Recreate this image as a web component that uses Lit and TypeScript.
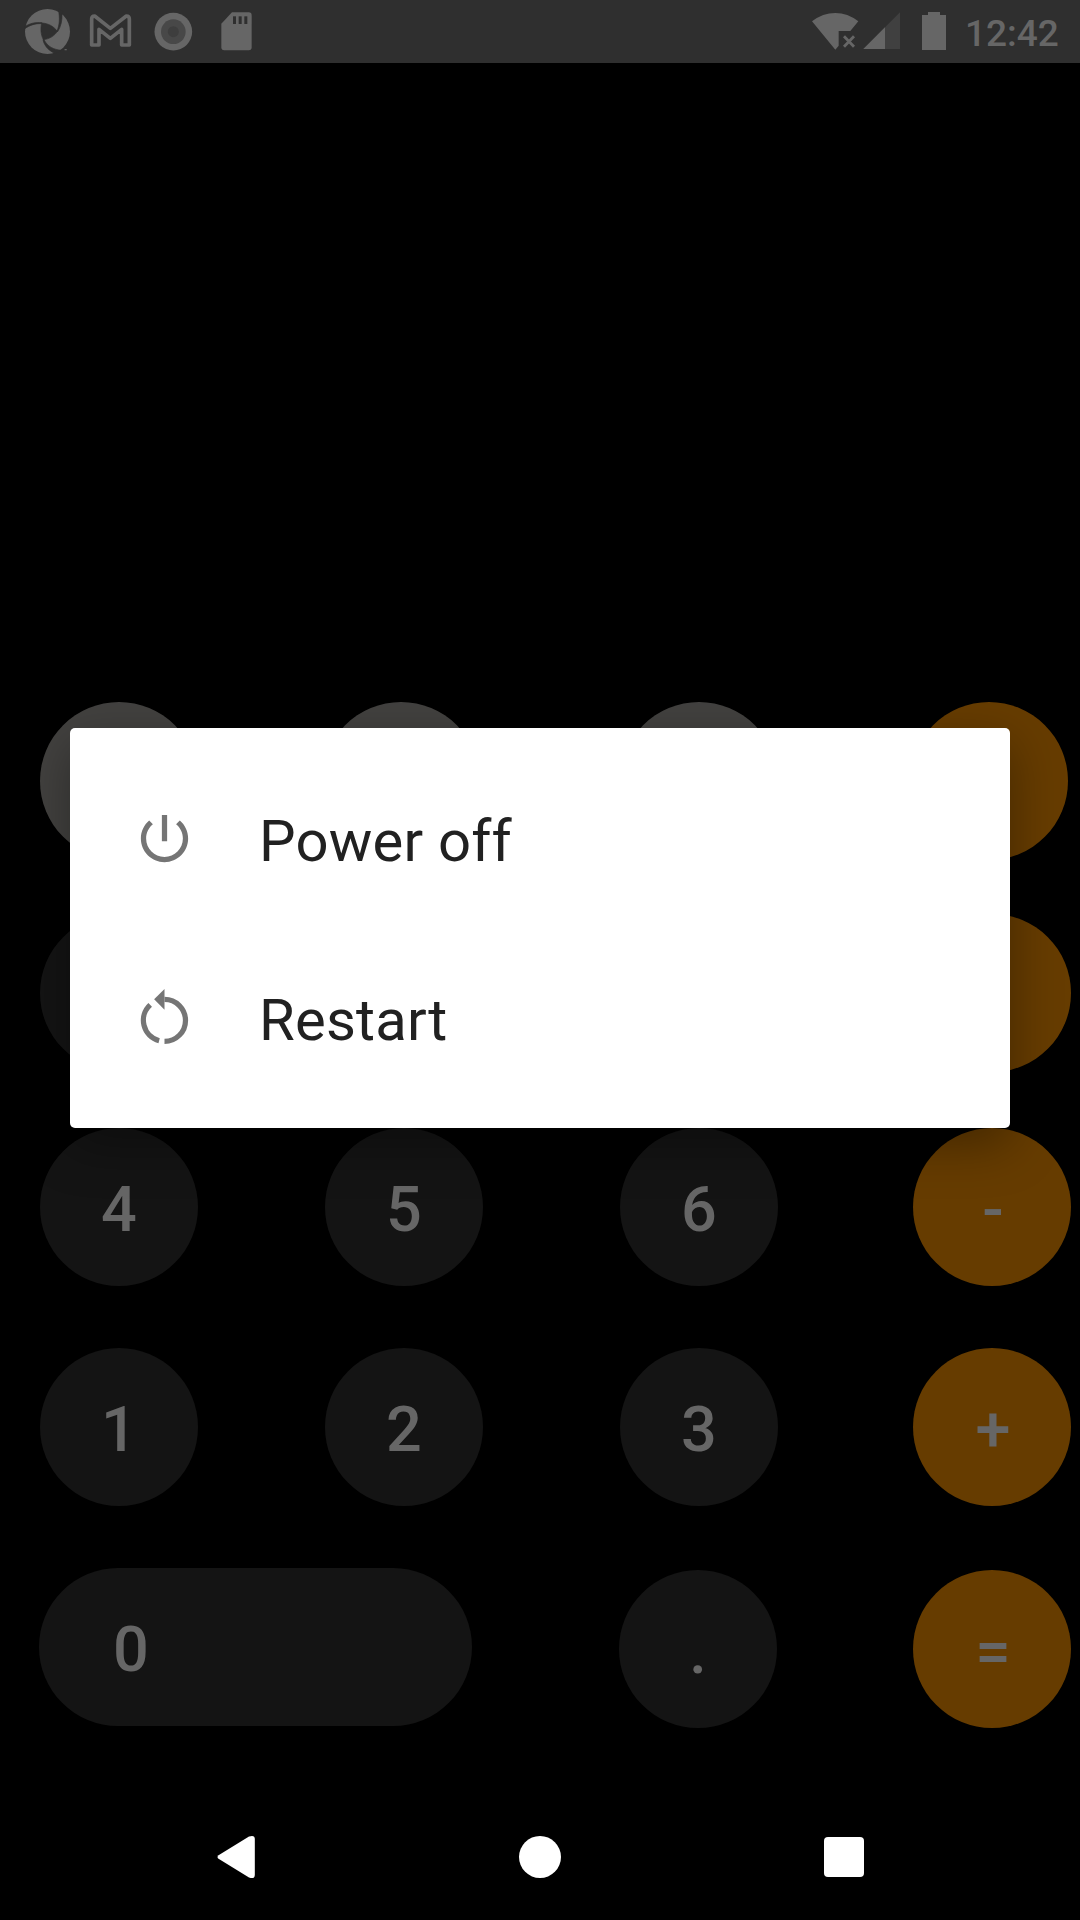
import { LitElement, html, css, svg } from "lit";
import { customElement } from "lit/decorators.js";

type Key = { label: string; tone: "light" | "dark" | "accent" | "wide" };
type Row = { kind: string; keys: Key[] };

const blank = (tone: Key["tone"]): Key => ({ label: "", tone });
const dark = (label: string): Key => ({ label, tone: "dark" });
const accent = (label: string): Key => ({ label, tone: "accent" });

const ROWS: Row[] = [
  { kind: "functions", keys: [blank("light"), blank("light"), blank("light"), blank("accent")] },
  { kind: "upper", keys: [blank("dark"), blank("dark"), blank("dark"), blank("accent")] },
  { kind: "middle", keys: [dark("4"), dark("5"), dark("6"), accent("-")] },
  { kind: "lower", keys: [dark("1"), dark("2"), dark("3"), accent("+")] },
  { kind: "last", keys: [{ label: "0", tone: "wide" }, dark("."), accent("=")] },
];

@customElement("status-bar")
export class StatusBar extends LitElement {
  static styles = css`
    :host {
      display: flex;
      justify-content: space-between;
      height: 63px;
      background: #2f2f2f;
      color: #666;
      fill: #666;
    }
    .group { display: flex; }
    .clock {
      font: 500 37px/63px Roboto, sans-serif;
      width: 115px;
      padding-top: 2px;
      box-sizing: border-box;
      white-space: nowrap;
    }
    svg { display: block; }
  `;

  render() {
    return html`
      <div class="group">
        <svg width="280" height="63" viewBox="0 0 840 189">
          <circle cx="142.500" cy="94.500" r="67.500" />
          <g fill="#2f2f2f" stroke="#2f2f2f" stroke-width="2" stroke-linejoin="round">
            <path d="M125 69 C145 70 161 79 172 94 C164 107 149 117 130 119 C122 103 121 86 125 69 Z" />
            <path d="M74 80 C90 70 106 66 126 68 L125 71 C106 70 91 75 74 86 Z" />
            <path d="M175 26 C180 55 179 74 171 93 L173 95 C183 79 187 62 186 40 L190 34 Z" />
            <path d="M129 119 C133 139 147 152 166 161 L186 151 C160 149 143 140 132 119 Z" />
          </g>
          <ellipse cx="197" cy="149" rx="4" ry="2" />
          <path d="M275 135 V57 Q275 48 284 48 L331 85 L379 48 Q388 48 388 57 V135 H365 V88 L331 115 L297 88 V135 Z" fill="none" stroke="#666" stroke-width="11" stroke-linejoin="round" />
          <circle cx="520" cy="95" r="56.500" />
          <circle cx="520" cy="95" r="37" fill="#484848" />
          <circle cx="520" cy="95" r="16.500" fill="#3e3e3e" />
          <path d="M696 37 H746 Q755 37 755 47 V142 Q755 151 746 151 H673 Q664 151 664 142 V71 Z" />
          <g fill="#2f2f2f">
            <rect x="699" y="49" width="9" height="23" />
            <rect x="716" y="49" width="9" height="23" />
            <rect x="733" y="49" width="9" height="23" />
          </g>
        </svg>
      </div>
      <div class="group">
        <svg width="176" height="63" viewBox="0 0 528 189">
          <g transform="translate(3 0)">
            <path d="M66 64 Q98 39 136 39 Q173 39 205 64 L181 93 H146 V137 L136 149 Z" />
            <path d="M162 109 L192 140 M192 109 L162 140" stroke="#666" stroke-width="8.500" />
            <path d="M220 147 L330 37 V147 Z" fill="#404040" />
            <path d="M220 147 L285 82 V147 Z" />
            <path d="M396 45 H414 V36 H450 V45 H468 V150 H396 Z" />
          </g>
        </svg>
        <div class="clock">12:42</div>
      </div>
    `;
  }
}

@customElement("calc-keypad")
export class CalcKeypad extends LitElement {
  static styles = css`
    :host { display: block; padding-top: 639px; }
    .row {
      display: grid;
      grid-template-columns: 285px 295px 293px 158px;
      padding-left: 40px;
    }
    .functions { grid-template-columns: 282px 298px 290px 158px; height: 212px; }
    .upper { height: 214px; }
    .middle { height: 220px; }
    .lower { height: 220px; }
    .last { grid-template-columns: 580px 294px 158px; padding-left: 39px; }
    .last .dark, .last .accent { margin-top: 2px; }
    .key {
      display: flex;
      align-items: center;
      justify-content: center;
      width: 158px;
      height: 158px;
      box-sizing: border-box;
      padding-top: 5px;
      border-radius: 79px;
      color: #666;
      font: 500 63px/74px Roboto, sans-serif;
    }
    .light { background: #42413f; }
    .dark, .wide { background: #141414; }
    .accent { background: #663c00; padding-left: 2px; }
    .wide { width: 433px; justify-content: flex-start; padding-left: 74px; }
  `;

  render() {
    return ROWS.map(
      (row) => html`<div class="row ${row.kind}">
        ${row.keys.map((key) => html`<div class="key ${key.tone}">${key.label}</div>`)}
      </div>`
    );
  }
}

@customElement("power-dialog")
export class PowerDialog extends LitElement {
  static styles = css`
    :host {
      display: block;
      width: 940px;
      height: 400px;
      box-sizing: border-box;
      padding: 21px 0;
      border-radius: 5px;
      background: #fff;
      box-shadow: 0 16px 50px rgba(0, 0, 0, 0.35);
    }
    .item {
      display: flex;
      align-items: center;
      gap: 63px;
      height: 179px;
      padding-left: 63px;
      color: #212121;
      font: 400 58px/68px Roboto, sans-serif;
      letter-spacing: 0.2px;
    }
    .icon { width: 63px; height: 63px; fill: #757575; }
    .label { padding-top: 5px; }
  `;

  render() {
    const power = svg`<path d="M13 3h-2v10h2V3zm4.83 2.17l-1.42 1.42C17.99 7.860 19 9.810 19 12c0 3.870-3.130 7-7 7s-7-3.130-7-7c0-2.190 1.010-4.140 2.580-5.420L6.170 5.170C4.230 6.820 3 9.260 3 12c0 4.970 4.030 9 9 9s9-4.030 9-9c0-2.740-1.230-5.180-3.170-6.830z" />`;
    const restart = svg`
      <path d="M12 1.100 V9 L8.050 5.050 Z" />
      <path d="M12 5.100 A8 8 0 0 1 12 21.100 M9.950 20.830 A8 8 0 0 1 6.550 7.200" fill="none" stroke="#757575" stroke-width="2" />`;
    return html`
      <div class="item">
        <svg class="icon" viewBox="0 0 24 24">${power}</svg>
        <span class="label">Power off</span>
      </div>
      <div class="item">
        <svg class="icon" viewBox="0 0 24 24">${restart}</svg>
        <span class="label">Restart</span>
      </div>
    `;
  }
}

@customElement("nav-bar")
export class NavBar extends LitElement {
  static styles = css`
    :host {
      display: flex;
      align-items: center;
      height: 126px;
      padding-left: 217px;
      background: #000;
    }
    svg { display: block; fill: #fff; }
    .back { margin-right: 264px; }
    .home { margin-right: 263px; width: 42px; height: 42px; border-radius: 50%; background: #fff; }
    .recent { width: 40px; height: 40px; border-radius: 4px; background: #fff; }
  `;

  render() {
    return html`
      <svg class="back" width="38" height="44" viewBox="0 0 38 44">
        <path d="M1.500 20.200 L32 1.500 Q37.800 -0.500 37.800 4 V40 Q37.800 44.500 32 42.500 L1.500 23.800 Q-0.500 22 1.500 20.200 Z" />
      </svg>
      <div class="home"></div>
      <div class="recent"></div>
    `;
  }
}

@customElement("app-root")
export class AppRoot extends LitElement {
  static styles = css`
    :host {
      display: flex;
      flex-direction: column;
      position: relative;
      width: 1080px;
      height: 1920px;
      overflow: hidden;
      background: #000;
    }
    .keypad { flex: 1; }
    .overlay {
      position: absolute;
      inset: 0;
      display: flex;
      justify-content: center;
      align-items: flex-start;
      padding-top: 728px;
    }
  `;

  render() {
    return html`
      <status-bar></status-bar>
      <calc-keypad class="keypad"></calc-keypad>
      <nav-bar></nav-bar>
      <div class="overlay"><power-dialog></power-dialog></div>
    `;
  }
}
